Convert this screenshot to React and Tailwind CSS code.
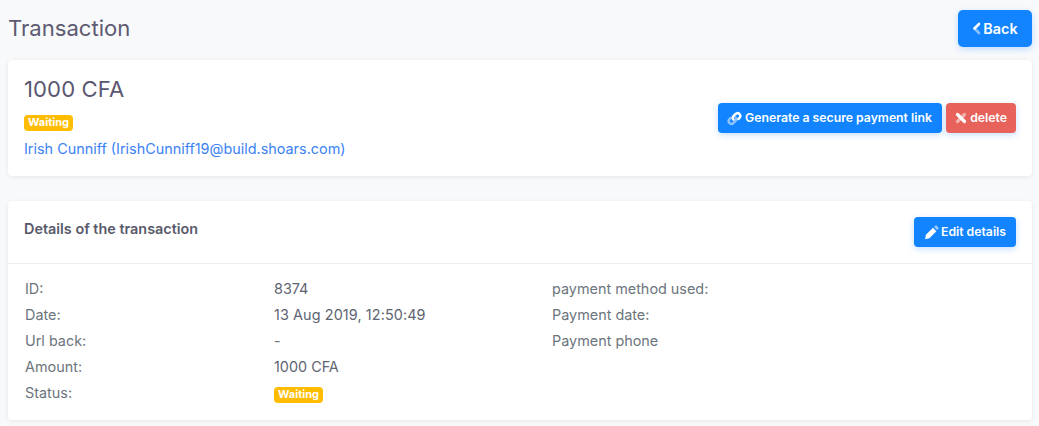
const ff = "font-['Inter',sans-serif]";

function Badge() {
  return (
    <span className="inline-flex h-4 w-[49px] items-center justify-center rounded-[4px] bg-[#ffbc00] text-[11px] leading-none font-bold text-white">
      Waiting
    </span>
  );
}

function Btn({ className = "", icon, children }) {
  return (
    <button className={`inline-flex items-center justify-center text-white font-semibold shadow-[0_2px_6px_0_rgba(20,130,255,0.25)] ${className}`}>
      {icon}
      {children}
    </button>
  );
}

const Chevron = () => (
  <svg width="9" height="14" viewBox="0 0 9 14" className="mr-[2px]">
    <path d="M7 2 L2.5 6.5" stroke="#fff" strokeWidth="2.6" strokeLinecap="round" fill="none" />
    <path d="M2.5 6.5 L7 11" stroke="#fff" strokeOpacity="0.5" strokeWidth="2.6" strokeLinecap="round" fill="none" />
  </svg>
);

const LinkIcon = () => (
  <svg width="15" height="15" viewBox="0 0 14 14" className="mr-[3px] -ml-[1px]" fill="none">
    <path d="M6 8 C5 6.8 5.3 5.6 6.2 4.6 L7.8 3 C9 1.8 10.6 1.8 11.7 2.8 C12.7 3.9 12.6 5.5 11.5 6.6 L10.6 7.5" stroke="#fff" strokeWidth="2.3" strokeLinecap="round" />
    <path d="M8 6 C9 7.2 8.7 8.4 7.8 9.4 L6.2 11 C5 12.2 3.4 12.2 2.3 11.2 C1.3 10.1 1.4 8.5 2.5 7.4 L3.4 6.5" stroke="#fff" strokeOpacity="0.5" strokeWidth="2.3" strokeLinecap="round" />
  </svg>
);

const CrossIcon = () => (
  <svg width="12" height="12" viewBox="0 0 12 12" className="mr-[3px]" fill="none">
    <path d="M2.5 2.5 L9.5 9.5" stroke="#fff" strokeWidth="3.2" strokeLinecap="round" />
    <path d="M9.5 2.5 L2.5 9.5" stroke="#fff" strokeOpacity="0.5" strokeWidth="3.2" strokeLinecap="round" />
  </svg>
);

const PencilIcon = () => (
  <svg width="15" height="15" viewBox="0 0 14 14" className="mr-[2px]">
    <path d="M8.4 2.6 L11.6 5.8 L5 12.4 L1 13.2 L1.8 9.2 Z" fill="#fff" />
    <path d="M9.4 1.8 L10.4 0.8 C10.9 0.3 11.6 0.3 12.1 0.8 L13.3 2 C13.8 2.5 13.8 3.2 13.3 3.7 L12.3 4.7 Z" fill="#fff" fillOpacity="0.55" />
  </svg>
);

function Field({ label, value, valueClass = "" }) {
  return (
    <div className="flex h-[26px] items-center">
      <div className="w-[249px] text-[#6c757d]">{label}</div>
      <div className={valueClass}>{value}</div>
    </div>
  );
}

export default function App() {
  return (
    <div className={`${ff} h-[426px] overflow-hidden bg-[#f8f9fb] pl-2 pr-[7px] text-[14.4px] antialiased`}>
      <header className="flex h-[60px] items-start justify-between">
        <h1 className="mt-[15px] text-[22.1px] leading-[27px] font-normal text-[#5d5a72]">Transaction</h1>
        <Btn className="mt-[10px] h-[37px] w-[74px] rounded-[5px] bg-[#1284ff] text-[14.4px]" icon={<Chevron />}>
          Back
        </Btn>
      </header>

      <section className="flex h-[116px] items-center justify-between rounded-[4px] bg-white pl-4 pr-4 shadow-[0_1px_4px_0_rgba(0,0,0,0.08)]">
        <div className="pb-[1px]">
          <div className="-mt-[1px] text-[22.1px] leading-[27px] text-[#5b5671] tracking-[0.1px]">1000 CFA</div>
          <div className="mt-[12px] flex"><Badge /></div>
          <div className="mt-[7px] leading-[21px] text-[#3b82f6]">
            Irish Cunniff (IrishCunniff19@build.shoars.com)
          </div>
        </div>
        <div className="flex gap-1">
          <Btn className="h-[30px] w-[224px] rounded-[4px] bg-[#1284ff] text-[12.24px]" icon={<LinkIcon />}>
            Generate a secure payment link
          </Btn>
          <Btn className="h-[30px] w-[70px] rounded-[4px] bg-[#e8625c] text-[12.24px]" icon={<CrossIcon />}>
            delete
          </Btn>
        </div>
      </section>

      <section className="mt-[25px] h-[219px] rounded-[4px] bg-white shadow-[0_1px_4px_0_rgba(0,0,0,0.08)]">
        <div className="flex h-[63px] items-start justify-between border-b border-[#eceef1] px-4">
          <h2 className="mt-[19px] text-[14.4px] leading-[18px] font-semibold text-[#585a6a]">Details of the transaction</h2>
          <Btn className="mt-4 h-[30px] w-[102px] rounded-[4px] bg-[#1284ff] text-[12.24px]" icon={<PencilIcon />}>
            Edit details
          </Btn>
        </div>
        <div className="flex pl-[17px] pt-[12px]">
          <div className="w-[527px]">
            <Field label="ID:" value="8374" valueClass="text-[#5e6472]" />
            <Field label="Date:" value="13 Aug 2019, 12:50:49" valueClass="text-[#5e6472] tracking-[0.1px]" />
            <Field label="Url back:" value="-" valueClass="text-[#6c757d]" />
            <Field label="Amount:" value="1000 CFA" valueClass="text-[#5e6472]" />
            <Field label="Status:" value={<span className="mt-[3px] flex"><Badge /></span>} />
          </div>
          <div className="text-[#6c757d]">
            <div className="flex h-[26px] items-center">payment method used:</div>
            <div className="flex h-[26px] items-center">Payment date:</div>
            <div className="flex h-[26px] items-center">Payment phone</div>
          </div>
        </div>
      </section>
    </div>
  );
}
